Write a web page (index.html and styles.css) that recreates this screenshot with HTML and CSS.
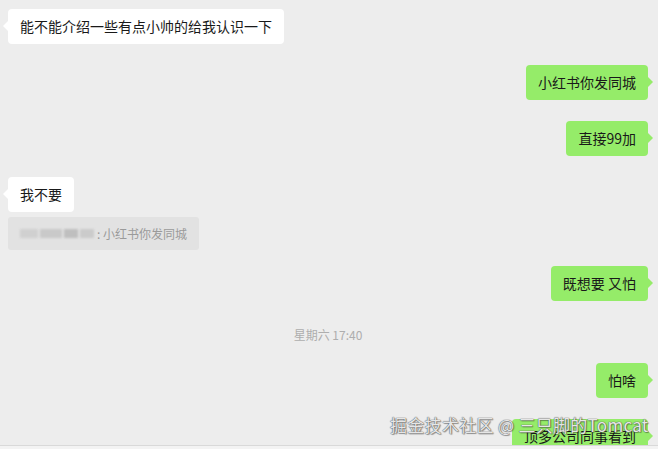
FILE: index.html
```html
<!DOCTYPE html>
<html lang="zh">
<head>
<meta charset="utf-8">
<link rel="stylesheet" href="styles.css">
</head>
<body>
<div class="chat">
  <div class="row left"><div class="bubble white">能不能介绍一些有点小帅的给我认识一下</div></div>
  <div class="row right"><div class="bubble green">小红书你发同城</div></div>
  <div class="row right"><div class="bubble green">直接99加</div></div>
  <div class="row left"><div class="bubble white">我不要</div></div>
  <div class="quote"><span class="blur"><i class="b1"></i><i class="b2"></i><i class="b3"></i><i class="b4"></i></span><span class="qtext">: 小红书你发同城</span></div>
  <div class="row right r5"><div class="bubble green">既想要 又怕</div></div>
  <div class="time">星期六 17:40</div>
  <div class="row right r6"><div class="bubble green">怕啥</div></div>
  <div class="row right"><div class="bubble green">顶多公司同事看到</div></div>
  <div class="watermark">掘金技术社区 @ 三只脚的Tomcat</div>
</div>
<div class="footer"></div>
</body>
</html>
```

FILE: styles.css
```css
html, body {
  margin: 0;
  padding: 0;
  background: #ededed;
}
body {
  font-family: "Noto Sans CJK SC", "Noto Sans", sans-serif;
  color: #191919;
}
.chat {
  position: relative;
  height: 446px;
  overflow: hidden;
  padding: 9px 10px 0 8px;
  box-sizing: border-box;
  display: flex;
  flex-direction: column;
  border-bottom: 1px solid #d9d9d9;
}
.chat > * { flex-shrink: 0; }
.row {
  display: flex;
  margin-top: 21px;
}
.row:first-child { margin-top: 0; }
.row.left { justify-content: flex-start; }
.row.right { justify-content: flex-end; }
.row.r5 { margin-top: 16px; }
.row.r6 { margin-top: 20px; }
.bubble {
  position: relative;
  font-size: 14px;
  line-height: 19px;
  padding: 8px 12px;
  border-radius: 4px;
  white-space: nowrap;
}
.bubble.white { background: #ffffff; }
.bubble.green { background: #95ec69; }
.bubble.white::before {
  content: "";
  position: absolute;
  left: -5px;
  top: 12px;
  border-style: solid;
  border-width: 5px 5px 5px 0;
  border-color: transparent #ffffff transparent transparent;
}
.bubble.green::after {
  content: "";
  position: absolute;
  right: -5px;
  top: 12px;
  border-style: solid;
  border-width: 5px 0 5px 5px;
  border-color: transparent transparent transparent #95ec69;
}
.quote {
  align-self: flex-start;
  margin-top: 5px;
  height: 33px;
  box-sizing: border-box;
  padding: 0 12px 0 12px;
  background: #e2e2e2;
  border-radius: 3px;
  display: flex;
  align-items: center;
  font-size: 12px;
  color: #9a9a9a;
}
.blur {
  display: flex;
  align-items: center;
  gap: 2px;
  filter: blur(1.2px);
  width: 77px;
}
.blur i {
  display: block;
  height: 9px;
  background: #c4c4c4;
}
.blur .b1 { width: 18px; background: #d0d0d0; }
.blur .b2 { width: 22px; background: #c9c9c9; }
.blur .b3 { width: 14px; background: #bfbfbf; }
.blur .b4 { width: 14px; background: #cbcbcb; }
.qtext { white-space: nowrap; }
.time {
  margin-top: 25px;
  text-align: center;
  font-size: 12px;
  line-height: 17px;
  color: #aeaeae;
}
.watermark {
  position: absolute;
  left: 390px;
  top: 414px;
  font-size: 17px;
  letter-spacing: 0.3px;
  line-height: 22px;
  white-space: nowrap;
  color: rgba(245, 245, 245, 0.92);
  text-shadow: 0 0 1px #555, 0 0 1px #555, 1px 1px 1px rgba(0,0,0,0.35);
}
.footer {
  height: 3px;
  background: #f3f3f3;
}
```
